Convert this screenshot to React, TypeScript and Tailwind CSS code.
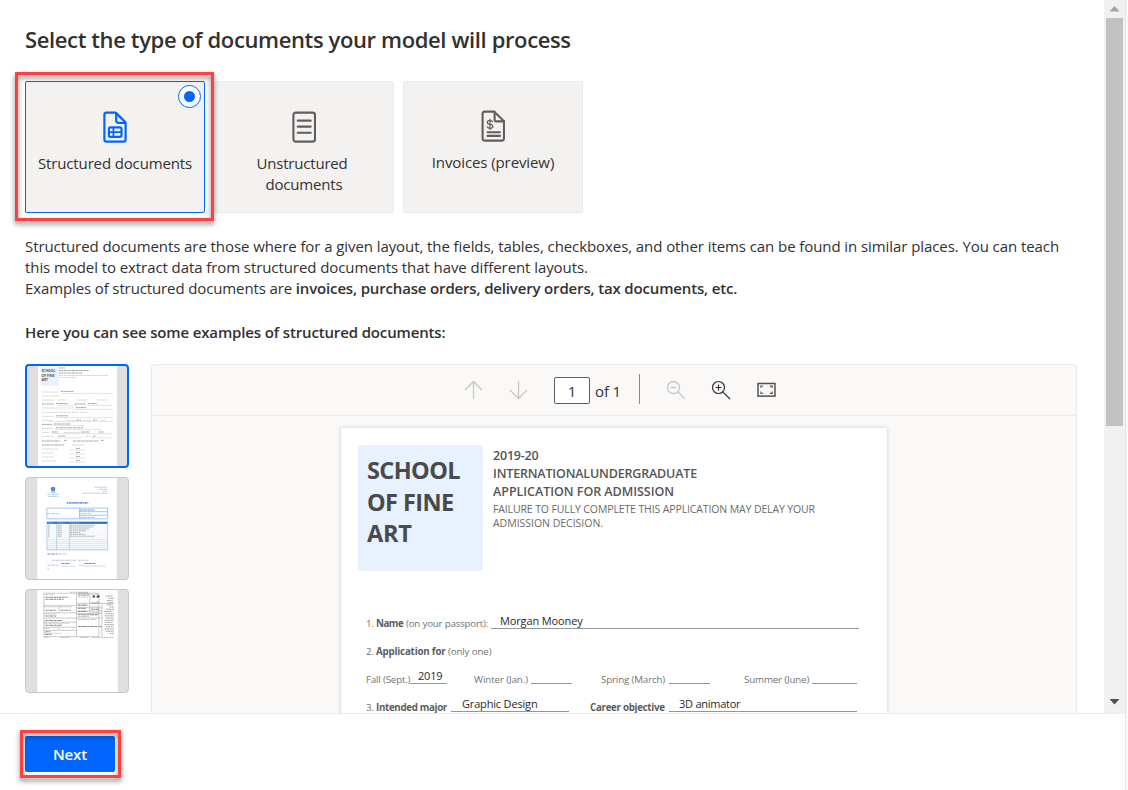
import type { ReactNode } from "react";

function StructuredIcon() {
  return (
    <svg width="24" height="32" viewBox="0 0 24 32" fill="none" stroke="#0066ff" strokeWidth="2.2" strokeLinejoin="round">
      <path d="M3.2 1.6H12.6L22.6 11.4V28.4Q22.6 30.6 20.4 30.6H3.6Q1.4 30.6 1.4 28.4V3.6Q1.4 1.6 3.2 1.6Z" />
      <path d="M13.2 1.8V9.6Q13.2 11.8 15.4 11.8H22.4" />
      <rect x="5.9" y="16.4" width="12.6" height="9.4" rx="1.6" />
      <path d="M10.4 16.4V25.8M5.9 21.1H18.5" strokeWidth="1.8" />
    </svg>
  );
}

function UnstructuredIcon() {
  return (
    <svg width="24" height="32" viewBox="0 0 24 32" fill="none" stroke="#605e5c" strokeWidth="2.1" strokeLinecap="round">
      <rect x="1.4" y="1.6" width="21.6" height="29" rx="2.4" />
      <path d="M5.7 9.6H18.7M5.7 15.6H18.7M5.7 21.7H18.7" />
    </svg>
  );
}

function InvoiceIcon() {
  return (
    <svg width="24" height="32" viewBox="0 0 24 32" fill="none" stroke="#605e5c" strokeWidth="2.1" strokeLinejoin="round" strokeLinecap="round">
      <path d="M3.4 1.6H13L23 11.2V28.6Q23 30.6 21 30.6H3.6Q1.6 30.6 1.6 28.6V3.6Q1.6 1.6 3.4 1.6Z" />
      <path d="M13.6 1.8V9.4Q13.6 11.4 15.6 11.4H23" />
      <path d="M6.6 22.2H18.9M6.6 25.9H18.9" />
      <path d="M11.6 11.8Q10.8 10.4 9 10.4Q6.3 10.4 6.3 12.4Q6.3 14 9 14.3Q11.9 14.6 11.9 16.5Q11.9 18.3 9 18.3Q6.9 18.3 6.2 16.8M9 9.2V19.4" strokeWidth="1.2" />
    </svg>
  );
}

function Callout({ className }: { className: string }) {
  return (
    <div
      className={`pointer-events-none absolute border-3 border-[#fb4142] drop-shadow-[0px_3px_2.5px_rgba(0,0,0,0.5)] ${className}`}
    />
  );
}

function Card({ icon, selected, children }: { icon: ReactNode; selected?: boolean; children: ReactNode }) {
  return (
    <div
      className={`relative flex h-[132px] w-[180px] flex-col items-center rounded-[2px] border bg-[#f3f2f1] text-[15px] leading-[21px] ${
        selected ? "border-[#0066ff]" : "border-[#edebe9]"
      }`}
    >
      {icon}
      {children}
      {selected && (
        <>
          <div className="absolute top-[3px] right-[3px] flex size-[23px] items-center justify-center rounded-full border border-[#0066ff] bg-white">
            <div className="size-[11px] rounded-full bg-[#0066ff]" />
          </div>
          <Callout className="-top-[10px] -left-[11px] h-[149px] w-[199px]" />
        </>
      )}
    </div>
  );
}

type Mark = [x: number, y: number, w: number, dark?: boolean];

const formMarks: Mark[] = [
  [34, 4, 6, true], [34, 6.5, 30, true], [34, 9, 23, true], [34, 11.5, 49], [34, 13.5, 17],
  [17, 28, 17], [36, 27.4, 13, true], [17, 32, 18], [17, 36, 12], [33, 36, 8], [52, 36, 10], [72, 36, 10],
  [17, 40, 12, true], [31, 39.6, 12, true], [50, 40, 11, true], [63, 39.6, 9, true],
  [17, 44, 32], [51, 43.6, 10, true], [17, 48.4, 46], [17, 52.4, 12], [31, 51.8, 12, true],
  [17, 56.4, 10], [42, 56.4, 10], [52, 56, 4, true], [58, 56.4, 8], [68, 56, 4, true], [76, 56.4, 4],
  [17, 60.4, 10, true], [29, 60, 17, true], [17, 64.4, 12], [31, 63.8, 27, true],
  [17, 68.4, 7], [27, 68, 6, true], [39, 68.4, 15], [56, 68, 9, true], [74, 68, 5, true],
  [17, 72.4, 12], [33, 72, 7, true], [61, 72.4, 5], [68, 72, 3, true],
  [17, 77, 18, true], [39, 76.4, 3, true], [48, 77, 26, true], [76, 76.4, 3, true],
  [17, 81, 22, true], [47, 81, 12], [17, 85, 16], [17, 89, 12], [17, 93, 12], [17, 97, 14],
  [51, 84.4, 4, true], [51, 88.4, 4, true], [51, 92.4, 4, true], [51, 96.4, 4, true],
];

const formRules: Mark[] = [
  [36, 29.4, 52], [33, 41.4, 18], [62, 41.4, 25], [50, 45.4, 38], [30, 53.6, 58], [25, 57.6, 63],
  [28, 61.6, 32], [30, 65.6, 47], [25, 69.6, 62], [30, 73.8, 27], [66, 73.8, 20],
  [44, 86, 16], [44, 90, 16], [44, 94, 16], [44, 98, 16],
];

function Scribble({ marks, light, dark }: { marks: Mark[]; light: string; dark: string }) {
  return (
    <>
      {marks.map(([x, y, w, d], i) => (
        <path
          key={i}
          d={`M${x} ${y}h${w}`}
          stroke={d ? dark : light}
          strokeWidth="1"
          strokeDasharray="2.4 .5 1.3 .4 3 .7"
        />
      ))}
    </>
  );
}

function FormThumb() {
  return (
    <svg className="h-full w-full" viewBox="2 2 100 100">
      <rect x="13" y="2" width="79" height="100" fill="#fff" />
      <rect x="15.5" y="3.5" width="18" height="18" fill="#e8f1ff" />
      <g fontFamily="Open Sans, sans-serif" fontSize="3.4" fontWeight="700" fill="#555">
        <text x="16.5" y="8.4">SCHOOL</text>
        <text x="16.5" y="13">OF FINE</text>
        <text x="16.5" y="17.4">ART</text>
      </g>
      <Scribble marks={formMarks} light="#d6d6d6" dark="#a2a2a2" />
      {formRules.map(([x, y, w], i) => (
        <path key={i} d={`M${x} ${y}h${w}`} stroke="#d0d0d0" strokeWidth=".6" />
      ))}
    </svg>
  );
}

const invoiceMarks: Mark[] = [
  [23, 18, 12], [24, 20, 10], [69, 11, 13], [74, 13, 8], [77, 15, 5], [58, 17, 24],
];
const invoiceText: Mark[] = [
  [23, 37, 12], [54, 37, 12], [54, 40.6, 15], [23, 76.4, 10, true], [34, 76.4, 8],
  [27, 82.6, 24], [53, 82.6, 10], [23, 87.6, 11], [54, 87.6, 4], [37, 85.8, 8, true], [59, 85.8, 11, true],
  [23, 91, 1.5],
];

function InvoiceThumb() {
  return (
    <svg className="h-full w-full" viewBox="2 2 100 99">
      <rect x="13" y="1" width="78" height="101" fill="#fff" />
      <circle cx="28.5" cy="12.8" r="2.3" fill="#4f88d2" />
      <path d="M26.4 15.8h4.6" stroke="#7aa5de" strokeWidth="1" />
      <Scribble marks={invoiceMarks} light="#b5cae8" dark="#7c9fd0" />
      <path d="M42 26.4h21" stroke="#6d9ee0" strokeWidth="1.6" strokeDasharray="1.6 .5 2.6 .4" />
      <path d="M22.5 31.5h59.5v10.5h-59.5zM54.5 31.5v10.5M54.5 35h27.5M54.5 38.5h27.5" fill="none" stroke="#8ebaea" strokeWidth=".8" />
      <path d="M55 33.300h14" stroke="#5a92dc" strokeWidth="1" strokeDasharray="2 .5" />
      <rect x="22.5" y="44.8" width="59.5" height="2.2" fill="#2b72d0" />
      <path d="M22.5 47v25.5h59.5v-25.5M32 47v25.5M44.5 47v25.5" fill="none" stroke="#9bc0ec" strokeWidth=".7" />
      {Array.from({ length: 13 }, (_, i) => (
        <path key={i} d={`M22.5 ${48.9 + i * 1.9}h59.5`} stroke={i < 7 ? "#e2e9f3" : "#b0cdee"} strokeWidth=".5" />
      ))}
      {Array.from({ length: 7 }, (_, i) => (
        <path
          key={i}
          d={`M23.5 ${48.3 + i * 1.8}h1.5M33 ${48.3 + i * 1.8}h4M45 ${48.3 + i * 1.8}h${[25, 23, 19, 16, 10, 15, 24][i]}`}
          stroke="#9aa3b0"
          strokeWidth=".8"
          strokeDasharray="2.2 .5 1.4 .4"
        />
      ))}
      <path d="M23.500 46h6M33 46h7M45 46h9" stroke="#8fb6ea" strokeWidth=".8" strokeDasharray="1.5 .5" />
      <Scribble marks={invoiceText} light="#b9c6da" dark="#8a8d92" />
      <path d="M36 88.4h14M58 88.4h22" stroke="#9ab4d6" strokeWidth=".5" />
    </svg>
  );
}

const slipMarks: Mark[] = [
  [45, 4.2, 16], [21, 6.2, 9], [21, 9, 22, true], [21, 11, 18, true], [53, 6.8, 11, true], [53, 8.8, 10],
  [66, 6.2, 8], [67, 8.8, 3, true], [71, 8.8, 3, true], [71, 13.5, 3], [20, 18.5, 14], [35, 18.5, 12],
  [21, 21.8, 10, true], [36, 21.8, 10, true], [20, 25.5, 12], [21, 27.6, 11, true],
  [53, 16.8, 9, true], [53, 20, 8, true], [53, 23, 9, true], [53, 26.2, 20, true], [53, 28, 11],
  [66, 18.4, 8], [66, 20.8, 8, true], [66, 23.8, 8], [21, 31.8, 17, true], [20, 34.6, 25],
  [21, 36.6, 16, true], [53, 31, 18], [53, 37.8, 20, true], [74, 37.8, 2, true], [20, 39.8, 5],
  [21, 43, 5, true], [21, 45.6, 6, true], [20, 48.6, 4], [36, 48.6, 9], [55, 48.6, 9], [67, 48.6, 21],
];

function SlipThumb() {
  return (
    <svg className="h-full w-full" viewBox="2 2 100 100">
      <rect x="13" y="1" width="79" height="102" fill="#fff" />
      <g fill="none" stroke="#b4b4b4" strokeWidth=".7">
        <path d="M19.5 5.2h54v42.5h-54zM51.5 5.2v42.5M64.5 5.2v21M76.5 15v33M19.5 17.4h32M34.5 17.4v7M19.5 24.4h32M19.5 29.5h57M19.5 33.6h32M19.5 38.5h32M19.5 41.6h32M51.5 15h36.5M51.5 19.4h25M51.5 22.6h25M51.5 25h25" />
        <path d="M51.5 17.4h12M34.5 38.5v3M19.5 44.5h17" strokeWidth=".5" />
      </g>
      <path d="M66 14.8h8M53 4.8h10" stroke="#888" strokeWidth=".8" />
      <Scribble marks={slipMarks} light="#c6c6c6" dark="#888888" />
      <path d="M67.500 8.200h2M71.500 8.200h2.500" stroke="#333" strokeWidth="1.600" />
      {[[80, 7], [83, 5], [81, 6], [82, 6], [81, 6], [84, 4], [81, 7], [79, 8], [80, 8], [79, 9], [80, 8], [79, 9], [80, 7], [79, 9], [80, 8], [79, 9], [80, 8], [84, 4]].map(
        ([x, w], i) => (
          <path
            key={i}
            d={`M${x} ${8 + i * 2.15}h${w}`}
            stroke="#9c9c9c"
            strokeWidth=".9"
            strokeDasharray="1.8 .4 2.6 .5"
          />
        ),
      )}
    </svg>
  );
}

function Thumb({ selected, short, children }: { selected?: boolean; short?: boolean; children: ReactNode }) {
  return (
    <div
      className={`w-[104px] overflow-hidden rounded-[4px] bg-[#e1dfdd] ${short ? "h-[103px]" : "h-[104px]"} ${
        selected ? "border-2 border-[#0066ff]" : "border border-[#c8c6c4]"
      }`}
    >
      {children}
    </div>
  );
}

function Toolbar() {
  return (
    <div className="flex h-[51px] items-center border-b border-[#edebe9]">
      <svg className="ml-[311px]" width="20" height="20" viewBox="0 0 20 20" fill="none" stroke="#c8c6c4" strokeWidth="1.3">
        <path d="M10.5 19V1.5M2 10L10.5 1.5L19 10" />
      </svg>
      <svg className="ml-[25px]" width="20" height="20" viewBox="0 0 20 20" fill="none" stroke="#c8c6c4" strokeWidth="1.3">
        <path d="M10.5 1V18.5M2 10L10.5 18.5L19 10" />
      </svg>
      <div className="ml-[26px] flex h-[27px] w-[36px] items-center justify-center rounded-[2px] border border-[#605e5c] bg-white pt-[2px] text-[15px]">
        1
      </div>
      <span className="ml-[5px] w-[27px] pt-[2px] text-[15px] tracking-[-0.14px] whitespace-nowrap">of 1</span>
      <div className="ml-[17px] h-[30px] w-px -translate-y-px bg-[#8a8886]" />
      <svg className="ml-[26px]" width="20" height="20" viewBox="0 0 20 20" fill="none" stroke="#c8c6c4" strokeWidth="1.3">
        <circle cx="7.5" cy="7.5" r="6" />
        <path d="M11.8 11.8L19 19M4.5 7.5H10.5" />
      </svg>
      <svg className="ml-[25px]" width="20" height="20" viewBox="0 0 20 20" fill="none" stroke="#323130" strokeWidth="1.2">
        <circle cx="7.500" cy="7.500" r="6" />
        <path d="M11.800 11.800L19 19M4.500 7.500H10.500M7.500 4.500V10.500" />
      </svg>
      <svg className="ml-[26px]" width="19" height="16" viewBox="0 0 19 16" fill="none" stroke="#55514e" strokeWidth="1.500">
        <rect x="1" y="1.500" width="17" height="12.600" />
        <path d="M3.800 6V4.200H6.200M6.200 11.400H3.800V9.600" stroke="#4a78a0" strokeWidth="1.200" />
        <path d="M12.800 4.200H15.200V6M15.200 9.600V11.400H12.800" stroke="#6e4a55" strokeWidth="1.200" />
      </svg>
    </div>
  );
}

function Field({ className = "h-[19px] leading-[22px]", children }: { className?: string; children?: ReactNode }) {
  return (
    <span className={`block shrink-0 border-b border-[#959595] text-[11px] text-[#2a2a2a] ${className}`}>{children}</span>
  );
}

function DocumentPage() {
  return (
    <div className="ml-[189px] mt-[12px] h-[400px] w-[546px] bg-white pt-[17px] shadow-[0_0_4px_rgba(0,0,0,0.18)]">
      <div className="flex h-[126px]">
        <div className="ml-[17px] w-[125px] rounded-[3px] bg-[#e8f1ff] pt-[10px] pl-[9px] text-[23.5px] leading-[31.5px] font-bold whitespace-nowrap text-[#4a4a4a]">
          <div className="tracking-[-0.6px]">SCHOOL</div>
          <div className="tracking-[-0.6px]">OF FINE</div>
          <div className="tracking-[-0.3px]">ART</div>
        </div>
        <div className="ml-[10px] pt-[2px] whitespace-nowrap">
          <div className="text-[12.5px] leading-[18px] font-semibold text-[#555]">
            <div className="tracking-[-0.2px]">2019-20</div>
            <div className="tracking-[-0.174px]">INTERNATIONALUNDERGRADUATE</div>
            <div className="tracking-[-0.034px]">APPLICATION FOR ADMISSION</div>
          </div>
          <div className="mt-px text-[10.5px] leading-[14px] text-[#6a6a6a]">
            <div className="tracking-[-0.125px]">FAILURE TO FULLY COMPLETE THIS APPLICATION MAY DELAY YOUR</div>
            <div className="tracking-[-0.021px]">ADMISSION DECISION.</div>
          </div>
        </div>
      </div>
      <div className="mt-[38px] ml-[25px] text-[9.75px] whitespace-nowrap text-[#737373]">
        <div className="flex h-[28px] leading-[30px]">
          <span className="w-[10px] shrink-0">1.</span>
          <b className="w-[30px] shrink-0 tracking-[-0.5px] text-[#5e5e5e]">Name</b>
          <span className="w-[85px] shrink-0 tracking-[-0.2px]">(on your passport):</span>
          <Field className="h-[20px] w-[368px] pl-[9px] leading-[24px] tracking-[-0.13px]">Morgan Mooney</Field>
        </div>
        <div className="flex h-[28px] leading-[30px]">
          <span className="w-[10px] shrink-0">2.</span>
          <b className="w-[72px] shrink-0 tracking-[-0.19px] text-[#5e5e5e]">Application for</b>
          <span className="tracking-[-0.14px]">(only one)</span>
        </div>
        <div className="flex h-[28px] leading-[30px]">
          <span className="w-[44px] shrink-0 tracking-[-0.18px]">Fall (Sept.)</span>
          <Field className="h-[19px] w-[37px] pl-[8px] leading-[22px] tracking-[-0.2px]">2019</Field>
          <span className="ml-[27px] w-[57px] shrink-0 tracking-[-0.1px]">Winter (Jan.)</span>
          <Field className="h-[19px] w-[41px]" />
          <span className="ml-[29px] w-[68px] shrink-0 tracking-[-0.15px]">Spring (March)</span>
          <Field className="h-[19px] w-[41px]" />
          <span className="ml-[34px] w-[68px] shrink-0 tracking-[-0.15px]">Summer (June)</span>
          <Field className="h-[19px] w-[45px]" />
        </div>
        <div className="flex h-[28px] leading-[30px]">
          <span className="w-[10px] shrink-0">3.</span>
          <b className="w-[75px] shrink-0 tracking-[-0.33px] text-[#5e5e5e]">Intended major</b>
          <Field className="h-[19px] w-[118px] pl-[11px] leading-[22px] tracking-[-0.17px]">Graphic Design</Field>
          <b className="ml-[21px] w-[79px] shrink-0 tracking-[-0.3px] text-[#5e5e5e]">Career objective</b>
          <Field className="h-[19px] w-[188px] pl-[10px] leading-[22px] tracking-[-0.25px]">3D animator</Field>
        </div>
      </div>
    </div>
  );
}

function ScrollBar() {
  return (
    <div className="flex w-[21px] shrink-0 flex-col items-center bg-[#f1f1f1]">
      <svg className="h-[18px] w-[21px]" viewBox="0 0 21 18">
        <path d="M5.5 11.5L10.5 6L15.5 11.5Z" fill="#a3a3a3" />
      </svg>
      <div className="h-[408px] w-[17px] bg-[#c1c1c1]" />
      <svg className="mt-auto h-[18px] w-[21px]" viewBox="0 0 21 18">
        <path d="M5.5 4L10.5 9.5L15.5 4Z" fill="#505050" />
      </svg>
    </div>
  );
}

export default function App() {
  return (
    <div className="flex h-[790px] w-[1128px] overflow-hidden bg-[#f8f8f8] font-['Open_Sans',sans-serif] text-[#323130]">
      <div className="flex w-[1126px] flex-col border-r border-[#e5e5e5] bg-white">
        <div className="flex h-[713px] shrink-0">
          <main className="flex min-w-0 flex-1 flex-col overflow-hidden pl-[25px]">
            <h1 className="mt-[23px] text-[22px] leading-[32px] font-semibold tracking-[-0.375px] whitespace-nowrap">
              Select the type of documents your model will process
            </h1>
            <div className="relative mt-[26px] flex shrink-0 flex-row-reverse justify-end gap-[9px]">
              <Card icon={<div className="mt-[28px] mb-[10px]"><InvoiceIcon /></div>}>
                <span className="tracking-[-0.1px]">Invoices (preview)</span>
              </Card>
              <Card icon={<div className="mt-[29px] mb-[10px]"><UnstructuredIcon /></div>}>
                <span className="mr-[4px] tracking-[-0.19px]">Unstructured</span>
                <span className="tracking-[-0.18px]">documents</span>
              </Card>
              <Card selected icon={<div className="mt-[29px] mb-[10px]"><StructuredIcon /></div>}>
                <span className="tracking-[-0.143px]">Structured documents</span>
              </Card>
            </div>
            <p className="mt-[23px] text-[15px] leading-[21px] whitespace-nowrap">
              <span className="block tracking-[-0.078px]">
                Structured documents are those where for a given layout, the fields, tables, checkboxes, and other items can be found in similar places. You can teach
              </span>
              <span className="block tracking-[-0.08px]">
                this model to extract data from structured documents that have different layouts.
              </span>
              <span className="tracking-[-0.12px]">Examples of structured documents are </span>
              <b className="font-semibold tracking-[-0.16px]">invoices, purchase orders, delivery orders, tax documents, etc.</b>
            </p>
            <h2 className="mt-[23px] text-[15px] leading-[21px] font-semibold tracking-[-0.145px]">
              Here you can see some examples of structured documents:
            </h2>
            <div className="mt-[21px] flex">
              <div className="flex shrink-0 flex-col gap-[9px]">
                <Thumb selected>
                  <FormThumb />
                </Thumb>
                <Thumb short>
                  <InvoiceThumb />
                </Thumb>
                <Thumb>
                  <SlipThumb />
                </Thumb>
              </div>
              <section className="ml-[22px] h-[500px] w-[926px] shrink-0 overflow-hidden rounded-[4px] border border-[#edebe9] bg-[#faf9f8]">
                <Toolbar />
                <DocumentPage />
              </section>
            </div>
          </main>
          <ScrollBar />
        </div>
        <footer className="flex-1 border-t border-[#edebe9] pt-[22px] pl-[25px]">
          <div className="relative w-[90px]">
            <button className="h-[36px] w-[90px] rounded-[2px] bg-[#0066ff] text-[15px] font-semibold tracking-[-0.148px] text-white">
              Next
            </button>
            <Callout className="-top-[6px] -left-[5px] h-[48px] w-[101px]" />
          </div>
        </footer>
      </div>
    </div>
  );
}
